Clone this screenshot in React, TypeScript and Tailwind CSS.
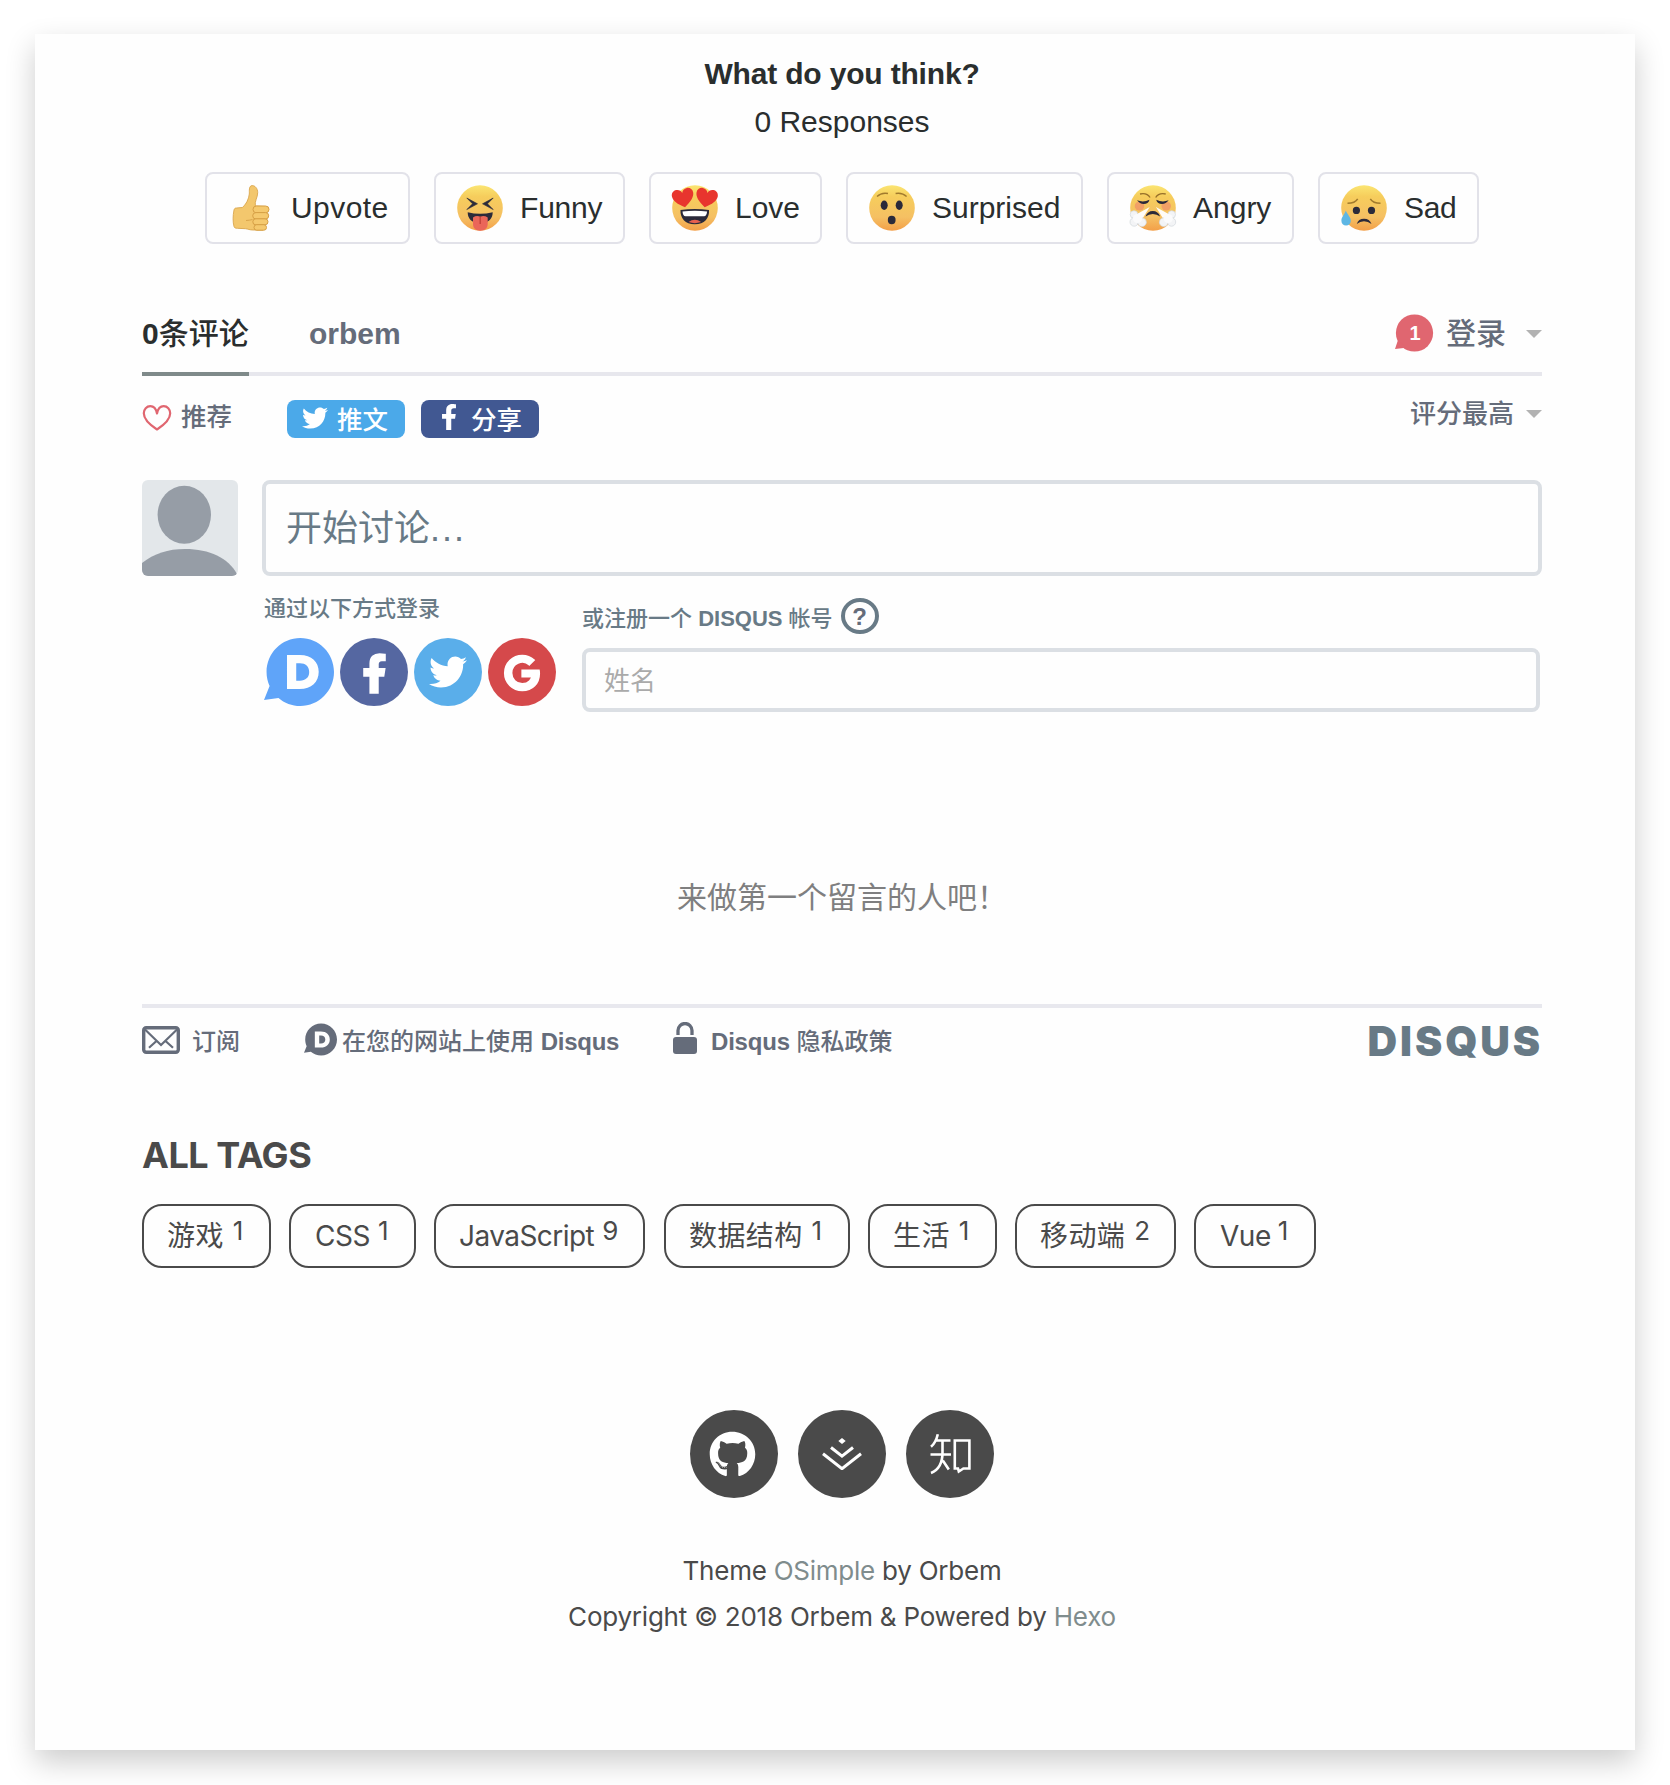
import React from "react";
import { FaFacebookF, FaGithub, FaGoogle, FaTwitter } from "react-icons/fa";
import { SiDisqus } from "react-icons/si";

function FaceBase({ id }: { id: string }) {
  return (
    <>
      <defs>
        <linearGradient id={id} x1="0" y1="0" x2="0" y2="1">
          <stop offset="0" stopColor="#fbe572" />
          <stop offset="0.25" stopColor="#f6cd5c" />
          <stop offset="0.7" stopColor="#f5c063" />
          <stop offset="1" stopColor="#f39f48" />
        </linearGradient>
      </defs>
      <circle cx="23" cy="23" r="22.8" fill={`url(#${id})`} />
    </>
  );
}

function Svg({ children }: { children: React.ReactNode }) {
  return (
    <svg viewBox="0 0 46 46" className="mx-px size-[46px] shrink-0 overflow-visible">
      {children}
    </svg>
  );
}

function Thumb() {
  return (
    <Svg>
      <path
        d="M24.2.6c3 0 5.5 3 5.5 7 0 5-3.2 8.300-2.400 13.400L37 21.500l-2 23.500H25c-3.500 0-5-1-7.500-1.300L9.500 43.300C7.500 43.200 6.500 43 6 41.500 4.800 37 4.800 31 6 25c.4-1.600 1.200-2 2.500-2l5.800-.5c3.700-2.700 6.500-8.500 7-13.500.2-2.500-.8-8.400 2.900-8.400z"
        fill="#f3c76d"
        stroke="#d9a54c"
        strokeWidth="0.900"
      />
      <g fill="#f5c96e" stroke="#d69f45" strokeWidth="1">
        <rect x="25" y="21" width="16" height="6.800" rx="3.400" />
        <rect x="24.700" y="27.600" width="16" height="6.400" rx="3.200" />
        <rect x="24.800" y="33.800" width="15.200" height="6" rx="3" />
        <rect x="26" y="39.700" width="12.500" height="5.500" rx="2.700" />
      </g>
      <path d="M18 35.500q4-.2 6.500-1" fill="none" stroke="#d9a54c" strokeWidth="1" />
    </Svg>
  );
}

function Funny() {
  return (
    <Svg>
      <FaceBase id="face-funny" />
      <path d="M9.800 13 20.500 18.800 9.800 24.600 15.500 18.800zM36.200 13 25.500 18.800l10.700 5.800-5.700-5.800z" fill="#2b2a3a" stroke="#2b2a3a" strokeWidth="0.600" strokeLinejoin="round" />
      <path d="M10.700 27.300q12.300 3 25 0c0 6-3.500 11-12.500 11s-12.500-5-12.500-11z" fill="#2b2a3a" />
      <path d="M16 32.500q3.500-2.500 7.300-.8 3.700-1.700 7.400.8v6.500c0 4-3 6.700-7.400 6.700S16 43 16 39z" fill="#ea6659" />
      <path d="M23.200 31.500v7.500" stroke="#c04138" strokeWidth="1.300" />
    </Svg>
  );
}

function Heart({ transform }: { transform: string }) {
  return (
    <path
      transform={transform}
      d="M0 9.500C-7 5-10.800 1-10.800-3.500c0-3.300 2.500-5.500 5.400-5.500C-2.700-9-.6-7.300 0-5 .6-7.300 2.700-9 5.400-9c2.900 0 5.400 2.200 5.400 5.500C10.800 1 7 5 0 9.500z"
      fill="#e8352e"
    />
  );
}

function Love() {
  return (
    <Svg>
      <FaceBase id="face-love" />
      <Heart transform="translate(11.200 12.800) rotate(-11)" />
      <Heart transform="translate(34.500 12.800) rotate(11)" />
      <path d="M8.500 25q14.300-1.800 28.500 0c.6 8-4.500 14.300-14.200 14.300S8 33 8.500 25z" fill="#2b2a3a" />
      <path d="M10.500 26.500q12.300-1.500 24.600 0c-.2 3-1.500 4.800-3 4.800H13.500c-1.700 0-2.800-2-3-4.800z" fill="#fff" />
      <path d="M16.500 37q6.300-4.500 12.600 0-6.300 2.300-12.600 0z" fill="#e8604f" />
    </Svg>
  );
}

function Surprised() {
  return (
    <Svg>
      <FaceBase id="face-surprised" />
      <path d="M8 11.500q4.500-4.300 11-3M37.600 11.500q-4.500-4.300-11-3" fill="none" stroke="#a17a2d" strokeWidth="1.400" />
      <ellipse cx="15.200" cy="20.300" rx="3.500" ry="4.700" fill="#2b2a3a" />
      <ellipse cx="30.200" cy="20.300" rx="3.500" ry="4.700" fill="#2b2a3a" />
      <ellipse cx="22.700" cy="35" rx="3.900" ry="4.200" fill="#2b2a3a" />
    </Svg>
  );
}

function Angry() {
  return (
    <Svg>
      <FaceBase id="face-angry" />
      <ellipse cx="9.500" cy="21" rx="4.800" ry="4.500" fill="#ee8a6a" opacity="0.650" />
      <ellipse cx="36.200" cy="21" rx="4.800" ry="4.500" fill="#ee8a6a" opacity="0.650" />
      <path d="M10 9q7-1.500 10 3.500M35.700 9q-7-1.500-10 3.500" fill="none" stroke="#97702a" strokeWidth="1.400" />
      <path d="M7 15.300q6.500 2.500 12.500-.6-1.200 4.300-5.800 4.300-4 0-6.700-3.700zM38.700 15.300q-6.500 2.500-12.500-.6 1.200 4.300 5.800 4.300 4 0 6.700-3.700z" fill="#2b2a3a" />
      <path d="M19.700 22 7 29l4 7zM25.900 22l12.700 7-4 7z" fill="#fff" opacity="0.950" />
      <path d="M15.500 31.500q2-5.500 7.300-5.500t7.300 5.500q-3.300-2.500-7.300-2.500t-7.300 2.500z" fill="#2b2a3a" />
      <g fill="#f3f4f6" stroke="#d3d8dc" strokeWidth="0.700">
        <circle cx="4" cy="29.500" r="3.800" /><circle cx="4.200" cy="37" r="4.200" /><circle cx="12" cy="37.200" r="4.300" />
        <circle cx="41.700" cy="29.500" r="3.800" /><circle cx="41.500" cy="37" r="4.200" /><circle cx="33.700" cy="37.200" r="4.300" />
      </g>
      <circle cx="7.500" cy="33.500" r="4.600" fill="#fbfbfc" />
      <circle cx="38.200" cy="33.500" r="4.600" fill="#fbfbfc" />
    </Svg>
  );
}

function Sad() {
  return (
    <Svg>
      <FaceBase id="face-sad" />
      <path d="M6.500 18.300q7.500 0 10.200-4.500M39.500 18.300q-7.500 0-10.200-4.500" fill="none" stroke="#a17a2d" strokeWidth="1.500" />
      <circle cx="15.400" cy="25.400" r="3.600" fill="#2b2a3a" />
      <circle cx="30.500" cy="25.400" r="3.600" fill="#2b2a3a" />
      <path d="M15.800 39q1.500-5.200 7.200-5.200t7.500 5.200q-3.500-2.800-7.500-2.800t-7.200 2.800z" fill="#2b2a3a" />
      <path d="M4.800 25.500c1.500 4 5 6.500 5 10.200 0 3-2 4.900-4.700 4.900S.4 38.700.4 35.700c0-3.700 3.200-6.200 4.400-10.200z" fill="#5db6e4" />
    </Svg>
  );
}

const reactions = [
  { label: "Upvote", icon: <Thumb />, width: "w-[205px] tracking-[0.450px]" },
  { label: "Funny", icon: <Funny />, width: "w-[191px] tracking-[-0.200px]" },
  { label: "Love", icon: <Love />, width: "w-[173px]" },
  { label: "Surprised", icon: <Surprised />, width: "w-[237px]" },
  { label: "Angry", icon: <Angry />, width: "w-[187px]" },
  { label: "Sad", icon: <Sad />, width: "w-[161px] tracking-[-0.300px]" },
];

const tags = [
  { name: "游戏", count: 1, style: "w-[129px] pl-[23px] gap-[9px] tracking-[0.400px]" },
  { name: "CSS", count: 1, style: "w-[127px] pl-6 gap-2 tracking-[-0.500px]" },
  { name: "JavaScript", count: 9, style: "w-[211px] mr-px pl-[23px] gap-2 tracking-[-0.550px]" },
  { name: "数据结构", count: 1, style: "w-[186px] pl-[23px] gap-[9px] tracking-[0.400px]" },
  { name: "生活", count: 1, style: "w-[129px] pl-[23px] gap-[9px] tracking-[0.400px]" },
  { name: "移动端", count: 2, style: "w-[161px] pl-[23px] gap-[9px] tracking-[0.400px]" },
  { name: "Vue", count: 1, style: "w-[122px] pl-6 gap-[7px] tracking-[-0.500px]" },
];

function Caret() {
  return <span className="h-0 w-0 border-x-[8px] border-t-[8px] border-x-transparent border-t-[#b2b2b2]" />;
}

function Reactions() {
  return (
    <section className="text-center text-[30px] leading-[48px] text-[#2a2e2e]">
      <h2 className="font-bold tracking-[-0.170px]">What do you think?</h2>
      <p>0 Responses</p>
      <div className="mt-[26px] flex justify-center gap-6">
        {reactions.map((r) => (
          <button key={r.label} className={`flex h-[72px] shrink-0 items-center rounded-lg border-2 border-[#e2e2e9] pl-5 ${r.width}`}>
            {r.icon}
            <span className="ml-4">{r.label}</span>
          </button>
        ))}
      </div>
    </section>
  );
}

function NavBar() {
  return (
    <nav className="mt-[50px] flex h-[82px] justify-between border-b-4 border-[#e7e7ed] text-[30px] font-bold leading-[80px] text-[#656c7a]">
      <div className="flex">
        <div className="h-[82px] w-[107px] border-b-4 border-[#7f8a8a] whitespace-nowrap text-[#2a2e2e]">
          0<span className="font-medium">条评论</span>
        </div>
        <div className="ml-[60px]">orbem</div>
      </div>
      <div className="flex h-[78px] items-center">
        <span className="relative mr-[13px] flex h-[38px] w-[38px] items-center justify-center">
          <svg viewBox="0 0 38 38" className="absolute inset-0 size-full overflow-visible">
            <circle cx="19.500" cy="19" r="18.600" fill="#e06670" />
            <path d="M3 26 0 35l11-1.200z" fill="#e06670" />
          </svg>
          <span className="relative pl-0.5 text-[20px] leading-5 text-white">1</span>
        </span>
        <span className="pt-0.5 font-medium">登录</span>
        <span className="mt-0.5 ml-5 flex"><Caret /></span>
      </div>
    </nav>
  );
}

function ShareRow() {
  return (
    <div className="mt-6 flex h-[38px] text-[26px] font-medium text-[#656c7a]">
      <div className="flex w-[145px] text-[25.500px] leading-[35px]">
        <svg viewBox="0 0 30 26" className="mt-[5px] mr-[9px] h-[26px] w-[30px] overflow-visible">
          <path
            d="M15 24.500C6.500 19 1.800 13.500 1.800 8.300 1.800 4.300 4.700 1.200 8.300 1.200 11.500 1.200 14 3.500 15 8.500 16 3.500 18.500 1.200 21.700 1.200c3.600 0 6.500 3.100 6.500 7.100 0 5.200-4.700 10.700-13.200 16.200z"
            fill="none" stroke="#e06670" strokeWidth="2.200" strokeLinejoin="round"
          />
        </svg>
        推荐
      </div>
      <div className="flex gap-4 leading-[40px] text-white">
        <button className="flex h-[38px] w-[118px] rounded-lg bg-[#4ba9e9] pl-[15px]">
          <FaTwitter className="mt-[5px] mr-[9px] size-[26px]" />
          <span className="text-[25.500px]">推文</span>
        </button>
        <button className="flex h-[38px] w-[118px] rounded-lg bg-[#415892] pl-[15px]">
          <FaFacebookF className="mt-1 mr-[9px] h-[26px] w-[26px]" />
          <span className="text-[25.500px]">分享</span>
        </button>
      </div>
      <div className="ml-auto flex leading-7">
        评分最高
        <span className="ml-3 mt-[10px] flex self-start"><Caret /></span>
      </div>
    </div>
  );
}

function CommentForm() {
  return (
    <section>
      <div className="mt-[42px] flex gap-6">
        <svg viewBox="0 0 96 96" className="size-24 rounded-md bg-[#e3e7ea]">
          <ellipse cx="42.300" cy="34.800" rx="26.700" ry="29" fill="#969da6" />
          <path d="M0 83C12 73.500 26 69 43 69c25 0 43 9 52 25l1 2H0z" fill="#969da6" />
        </svg>
        <div className="h-24 flex-1 rounded-lg border-4 border-[#dbdfe4] pl-5 text-[36px] leading-[89px] text-[#687a86]">
          开始讨论<span className="tracking-[2px]">...</span>
        </div>
      </div>
      <div className="flex pl-[122px] text-[22px] font-medium text-[#687a86]">
        <div className="w-[318px] pt-[17px]">
          <div className="leading-8">通过以下方式登录</div>
          <div className="mt-[13px] flex gap-1.5">
            <SiDisqus className="h-[70px] w-[70px] -my-px text-[#5fa4f9]" />
            <span className="flex size-[68px] items-center justify-center rounded-full bg-[#5567a1] text-white"><FaFacebookF className="mt-[3px] size-[39px] overflow-visible stroke-current stroke-[22]" /></span>
            <span className="flex size-[68px] items-center justify-center rounded-full bg-[#5aaeea] text-white"><FaTwitter className="size-[38px]" /></span>
            <span className="flex size-[68px] items-center justify-center rounded-full bg-[#d5494b] text-white"><FaGoogle className="mt-px size-[36px] overflow-visible stroke-current stroke-[26]" /></span>
          </div>
        </div>
        <div className="w-[958px] pt-[22px]">
          <div className="flex h-[36px] leading-[41px]">
            <span>或注册一个 <b>DISQUS</b> 帐号</span>
            <span className="ml-2 flex h-9 w-[38px] items-center justify-center rounded-[50%] border-4 border-[#687a86] pt-px text-[24px] font-bold leading-none text-[#656c7a]">?</span>
          </div>
          <div className="mt-[14px] h-16 rounded-lg border-4 border-[#dbdfe4] pl-[18px] text-[26px] font-normal leading-[58px] text-[#aaa]">姓名</div>
        </div>
      </div>
    </section>
  );
}

function DisqusFooter() {
  return (
    <div className="flex h-[78px] border-t-4 border-[#e8e8ee] text-[24px] font-medium leading-[68px] text-[#656c7a]">
      <svg viewBox="0 0 38 28" className="mt-[17.500px] h-7 w-[38px]">
        <rect x="1.700" y="1.700" width="34.600" height="24.600" rx="2.500" fill="none" stroke="#656c7a" strokeWidth="3.400" />
        <path d="M3 3.500 19 19 35 3.500M7 21.800l7.200-6.600M31 21.800l-7.200-6.600" fill="none" stroke="#656c7a" strokeWidth="2.200" />
      </svg>
      <span className="ml-3 w-[112px]">订阅</span>
      <SiDisqus className="mt-[15px] size-[33px]" />
      <span className="ml-[5px] w-[331px]">在您的网站上使用 <b className="tracking-[-0.250px]">Disqus</b></span>
      <svg viewBox="0 0 24 32" className="mt-[14px] h-8 w-6">
        <path d="M5 13V8.500a7 7 0 0 1 14 0V13" fill="none" stroke="#656c7a" strokeWidth="3.300" />
        <rect y="15" width="24" height="17" rx="3" fill="#656c7a" />
      </svg>
      <span className="ml-[14px]"><b className="tracking-[-0.200px]">Disqus</b> 隐私政策</span>
      <span className="mr-[-1px] ml-auto font-[Inter] text-[41px] font-black leading-[67px] tracking-[2.900px] text-[#687a86]">DISQUS</span>
    </div>
  );
}

function Tags() {
  return (
    <section className="font-[Inter,'Noto_Sans_CJK_SC',sans-serif] text-[#4a4a4a]">
      <h2 className="mt-[49px] text-[36px] font-bold leading-[48px] tracking-[-0.450px]">ALL TAGS</h2>
      <div className="mt-[25px] flex gap-[18px]">
        {tags.map((t) => (
          <a key={t.name} className={`flex h-16 shrink-0 rounded-[20px] border-2 border-[#4a4a4a] text-[28px] leading-[60px] ${t.style}`}>
            {t.name}
            <span className="text-[26px] leading-[50px]">{t.count}</span>
          </a>
        ))}
      </div>
    </section>
  );
}

function ZhihuMark() {
  return (
    <svg viewBox="0 0 40 40" className="size-10 overflow-visible" fill="none" stroke="currentColor" strokeWidth="2.600">
      <path d="M7.800.3C6.600 5.500 4.400 10 1 12.800M5 6.500h15.500M.5 20.500H21" />
      <path d="M12.500 6.500v12C12.500 28.500 8.500 36 1 39M12.800 26.500l6 9" />
      <path d="M24.800 6.500h14.600v28h-6L28.800 37.500l-.8-3h-3.200z" />
    </svg>
  );
}

function PageFooter() {
  return (
    <footer className="mt-[142px] text-center font-[Inter,sans-serif] text-[26px] leading-[46px] text-[#4a4a4a]">
      <div className="flex justify-center gap-5 text-white">
        <a className="flex size-[88px] items-center justify-center rounded-full bg-[#4a4a4a]"><FaGithub className="mr-[3px] size-[47px]" /></a>
        <a className="flex size-[88px] items-center justify-center rounded-full bg-[#4a4a4a]">
          <svg viewBox="0 0 40 32" className="h-8 w-10">
            <path d="m20 0 3.700 3-3.700 3-3.700-3z" fill="currentColor" />
            <path d="m9 9.500 11 8.700 11-8.700M1 15.700l19 15 19-15" fill="none" stroke="currentColor" strokeWidth="3" />
          </svg>
        </a>
        <a className="flex size-[88px] items-center justify-center rounded-full bg-[#4a4a4a]"><ZhihuMark /></a>
      </div>
      <p className="mt-[50px] tracking-[-0.240px]">Theme <a className="text-[#7f8c8d]">OSimple</a> by Orbem</p>
      <p className="tracking-[-0.220px]">Copyright © 2018 Orbem &amp; Powered by <a className="text-[#7f8c8d]">Hexo</a></p>
    </footer>
  );
}

export default function App() {
  return (
    <main lang="zh-CN" className="h-[1785px] overflow-hidden bg-white pt-[34px] pl-[35px] font-['Liberation_Sans','Noto_Sans_CJK_SC',sans-serif]">
      <div className="h-[1716px] w-[1600px] bg-[#fefefe] pt-4 pr-[93px] pl-[107px] shadow-[0_12px_28px_rgba(0,0,0,0.200)]">
        <Reactions />
        <NavBar />
        <ShareRow />
        <CommentForm />
        <p className="mt-[162px] h-[130px] text-center text-[30px] leading-[48px] text-[#7f7f80]">来做第一个留言的人吧！</p>
        <DisqusFooter />
        <Tags />
        <PageFooter />
      </div>
    </main>
  );
}
